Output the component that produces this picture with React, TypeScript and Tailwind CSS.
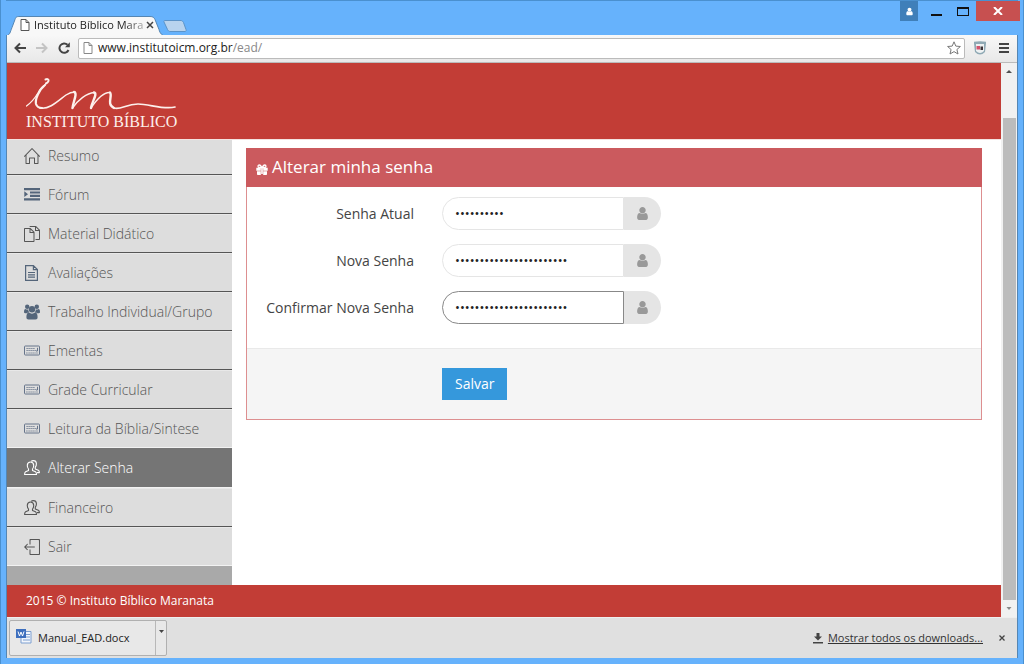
import { useState } from "react";
import type { ReactNode } from "react";
import { SlDocs, SlHome, SlLogout } from "react-icons/sl";

const UsersIcon = () => (
  <svg viewBox="0 0 16 16" className="size-4" fill="none" stroke="currentColor" strokeWidth="1.1" strokeLinejoin="round">
    <path d="M4.5 9C3.600 8 3.200 6.500 3.300 5.100C3.500 3 4.700 2 6.500 2s3 1 3.200 3.100c.1 1.400-.3 2.900-1.200 3.900v1.500l3 1.300c.8 .4 1 1.100 1 2.700H.6c0-1.600 .200-2.300 1-2.700l2.900-1.300z" />
    <path d="M7.200 1.300C7.700 .8 8.400 .6 9.300 .6c1.900 0 3 1 3.100 2.900 .1 1.500-.2 2.700-1.100 3.700v1.800l3 1.300c.8 .4 1.100 1 1.100 2.300h-2.400" />
  </svg>
);

const UserIcon = ({ className }: { className: string }) => (
  <svg viewBox="0 0 1792 1792" className={className} fill="currentColor">
    <path d="M1536 1399q0 109-62.5 187t-150.5 78h-854q-88 0-150.5-78t-62.5-187q0-85 8.5-160.5t31.5-152 58.5-131 94-89 134.5-34.5q131 128 313 128t313-128q76 0 134.5 34.5t94 89 58.5 131 31.5 152 8.5 160.5zm-256-887q0 159-112.5 271.5t-271.5 112.5-271.5-112.5-112.5-271.5 112.5-271.5 271.5-112.5 271.5 112.5 112.5 271.5z" />
  </svg>
);

const PageIcon = ({ className }: { className: string }) => (
  <svg viewBox="0 0 10 12" className={className} fill="#fff" stroke="currentColor">
    <path d="M1 .5h5l3 3v8H1zM6 .5v3h3" />
  </svg>
);

const IndentIcon = () => (
  <svg viewBox="0 0 16 16" className="size-4 text-[#54657a]" fill="currentColor">
    <path d="M0 1h16v2.200H0zM6 4.400h10v2.200H6zM6 7.800h10V10H6zM0 11.200h16v2.200H0zM.3 4.300L4 7.200.3 10.100z" />
  </svg>
);

const FileIcon = () => (
  <svg viewBox="0 0 16 16" className="size-4 text-[#54657a]" fill="none" stroke="currentColor" strokeWidth="1.2">
    <path d="M1.600 .6h7.800l4 4v10.800H1.600zM9.400 .6v4h4M4 7.500h7M4 9.800h7M4 12.100h7" />
  </svg>
);

const GroupIcon = () => (
  <svg viewBox="0 0 16 16" className="size-4 text-[#54657a]" fill="currentColor">
    <circle cx="3.200" cy="2.800" r="2.200" />
    <circle cx="12.800" cy="2.800" r="2.200" />
    <circle cx="8" cy="5.200" r="3.200" />
    <path d="M0 8c0-2 .5-3 1.500-3 .7 .5 1.800 .6 2.700 .4 0 1.200 .4 2 1 2.800-1 0-1.800 .4-2.400 1H1.200C.4 9.200 0 8.800 0 8zM16 8c0-2-.5-3-1.500-3-.7 .5-1.800 .6-2.700 .4 0 1.200-.4 2-1 2.800 1 0 1.800 .4 2.400 1h1.600c.8 0 1.200-.4 1.200-1.200zM2.400 13.300c0-3 .8-4.700 2.600-4.700 1.600 1.400 4.400 1.400 6 0 1.800 0 2.600 1.700 2.600 4.700 0 1.400-.8 2.200-2.100 2.200h-7c-1.300 0-2.100-.8-2.100-2.200z" />
  </svg>
);

const KeyboardIcon = () => (
  <svg viewBox="0 0 16 16" className="size-4 text-[#66748a]" fill="none" stroke="currentColor">
    <rect x=".5" y="3" width="15" height="9" rx=".8" />
    <path d="M2.500 5.500h8.500M2.500 7.500h10M4.500 10h7" strokeDasharray="1.200 .8" />
    <path d="M13.500 4.800v3.200h-1.500M2.300 10h1.200M12.400 10h1.200" />
  </svg>
);

const GiftIcon = () => (
  <svg viewBox="0 0 12 11" className="mt-1 h-[11px] w-3" fill="currentColor">
    <path d="M.3 3.800h4.500v3H.3zM7.200 3.800h4.500v3H7.200zM1 7.300h3.800V11H1.800C1.300 11 1 10.700 1 10.200zM7.200 7.300H11v2.900c0 .5-.3 .8-.8 .8h-3zM5.200 3.800h1.600V10H5.200z" />
    <path d="M5.500 3.500H3.300C1.600 3.500 1.600 1 3.300 1 4.500 1 5.200 2.300 6 3.500 6.800 2.300 7.500 1 8.700 1c1.700 0 1.700 2.500 0 2.500H6.500" fill="none" stroke="currentColor" strokeWidth="1.300" />
  </svg>
);

const menu: { label: string; icon: ReactNode }[] = [
  { label: "Resumo", icon: <SlHome className="size-4" /> },
  { label: "Fórum", icon: <IndentIcon /> },
  { label: "Material Didático", icon: <SlDocs className="size-4" /> },
  { label: "Avaliações", icon: <FileIcon /> },
  { label: "Trabalho Individual/Grupo", icon: <GroupIcon /> },
  { label: "Ementas", icon: <KeyboardIcon /> },
  { label: "Grade Curricular", icon: <KeyboardIcon /> },
  { label: "Leitura da Bíblia/Sintese", icon: <KeyboardIcon /> },
  { label: "Alterar Senha", icon: <UsersIcon /> },
  { label: "Financeiro", icon: <UsersIcon /> },
  { label: "Sair", icon: <SlLogout className="size-4" /> },
];

const fields = [
  { id: "atual", label: "Senha Atual", value: "maranata15" },
  { id: "nova", label: "Nova Senha", value: "institutobiblicomaranat" },
  { id: "confirma", label: "Confirmar Nova Senha", value: "institutobiblicomaranat" },
];

function TitleBar() {
  return (
    <div className="flex h-[35px] items-start justify-between border-t border-[#4a90cf] pl-[2px]">
      <div className="flex h-full items-end">
        <div className="relative flex h-[19px] w-[155px] items-center pl-3">
          <svg viewBox="0 0 155 19" className="absolute inset-0 size-full" fill="#f8f8f8" stroke="#5586b3">
            <path d="M-1 19.500c3-1 3-3 5-8l3-8c1-3 2-3 5-3h130c3 0 4 1 5 3l4 10c1 4 3 6 6 6" />
          </svg>
          <PageIcon className="relative h-3 w-[10px] text-[#555]" />
          <span className="relative ml-1 w-[112px] text-[11px] leading-4 whitespace-nowrap text-[#222] [mask-image:linear-gradient(to_right,#000_80%,#0004)]">
            Instituto Bíblico Mara
          </span>
          <button type="button" aria-label="Fechar guia" className="relative size-2 text-[#444]">
            <svg viewBox="0 0 8 8" stroke="currentColor" strokeWidth="1.5">
              <path d="M1 1l6 6M7 1L1 7" />
            </svg>
          </button>
        </div>
        <button type="button" aria-label="Nova guia" className="mb-[3px] h-3 w-6">
          <svg viewBox="0 0 24 12" fill="#b8d3ee" stroke="#5c94c9">
            <path d="M2 .5h16c1 0 2 1 2.500 2l2.500 7c.5 1 0 2-1 2H7c-1 0-2-1-2.500-2L1 2C.7 1 1 .5 2 .5z" />
          </svg>
        </button>
      </div>
      <div className="-mr-[2px] flex h-5 items-stretch">
        <button type="button" aria-label="Perfil" className="grid w-[18px] place-items-center bg-[#3f7fb9] text-white">
          <UserIcon className="size-[9px]" />
        </button>
        <button type="button" aria-label="Minimizar" className="flex w-8 items-end justify-center pb-[5px] pl-1">
          <span className="h-[2px] w-[11px] bg-[#111]" />
        </button>
        <button type="button" aria-label="Maximizar" className="flex w-[26px] items-end justify-center pb-[5px]">
          <span className="h-[9px] w-3 border border-t-2 border-[#111]" />
        </button>
        <button type="button" aria-label="Fechar" className="grid w-11 place-items-center bg-[#c75050] text-white">
          <svg viewBox="0 0 10 8" className="h-2 w-[10px]" stroke="currentColor" strokeWidth="2">
            <path d="M1 0l8 8M9 0L1 8" />
          </svg>
        </button>
      </div>
    </div>
  );
}

function Toolbar() {
  return (
    <div className="flex h-7 items-center border-b border-[#bbb] bg-linear-to-b from-[#f8f8f8] to-[#e8e8e8] pr-2 pl-[7px]">
      <button type="button" aria-label="Voltar" className="size-3 text-[#444]">
        <svg viewBox="0 0 12 12" fill="none" stroke="currentColor" strokeWidth="2">
          <path d="M6 1.500L1.500 6 6 10.500M1.500 6H12" />
        </svg>
      </button>
      <button type="button" aria-label="Avançar" className="ml-[10px] size-3 text-[#c4c4c4]">
        <svg viewBox="0 0 12 12" fill="none" stroke="currentColor" strokeWidth="2">
          <path d="M6 1.500L10.500 6 6 10.500M10.500 6H0" />
        </svg>
      </button>
      <button type="button" aria-label="Recarregar" className="ml-[10px] size-3 text-[#444]">
        <svg viewBox="0 0 12 12" fill="none" stroke="currentColor" strokeWidth="2">
          <path d="M9.500 2.800A4.700 4.700 0 1 0 10.500 8" />
          <path d="M11.800 .3v5H7z" fill="currentColor" stroke="none" />
        </svg>
      </button>
      <div className="ml-2 flex h-[21px] grow items-center rounded-[2px] border border-[#bbb] bg-white pr-[3px] pl-1">
        <PageIcon className="h-3 w-[10px] text-[#888]" />
        <span className="ml-[5px] grow text-[12px] leading-4 text-[#222]">
          www.institutoicm.org.br<span className="text-[#888]">/ead/</span>
        </span>
        <button type="button" aria-label="Favoritar" className="size-[14px]">
          <svg viewBox="0 0 14 14" fill="#fff" stroke="#777">
            <path d="M7 .8l1.800 4.300 4.600 .4-3.500 3 1.100 4.500L7 10.600 3 13l1.100-4.500-3.500-3 4.600-.4z" />
          </svg>
        </button>
      </div>
      <button type="button" aria-label="Extensão" className="ml-2 size-[14px]">
        <svg viewBox="0 0 14 14">
          <path d="M1 .8Q7-.5 13 .8V2.500L12 11Q7 16 2 11L1 2.500z" fill="#8fa9b4" />
          <path d="M3 3h8v7q-4 4-8 0z" fill="#eef1f2" />
          <path d="M3.500 5h3.500v3.500H3.500z" fill="#d3526c" />
          <path d="M7.500 5.500h2.500V9H7.500z" fill="#3d3237" />
        </svg>
      </button>
      <button type="button" aria-label="Menu" className="ml-3 flex w-[10px] flex-col gap-[2px]">
        <span className="h-[2px] bg-[#444]" />
        <span className="h-[2px] bg-[#444]" />
        <span className="h-[2px] bg-[#444]" />
      </button>
    </div>
  );
}

function Logo() {
  return (
    <div className="text-[#fdf0ec]">
      <svg viewBox="0 0 150 34" className="h-[34px] w-[150px]" fill="none" stroke="currentColor" strokeLinecap="round">
        <path d="M.5 29C6 25 9 21 12 16 14 12 16 9 19 8" strokeWidth="1.300" />
        <path d="M19 8C13 13 9 22 10 27c1 3 3 4 6 4" strokeWidth="2.200" />
        <path d="M14 31c9 2 18-7 26-13 3-2 6-3 9-3" strokeWidth="1.500" />
        <path d="M48 15c4 1-1 10-1.500 16" strokeWidth="2.400" />
        <path d="M46.500 31C52 23 61 16 68 15.500" strokeWidth="1.400" />
        <path d="M68 15.500c4 1-2 9-3 15.500" strokeWidth="2.400" />
        <path d="M65 31C71 22 78 15 84 15.500" strokeWidth="1.400" />
        <path d="M84 15.500c3 3-4 12 4 15.500" strokeWidth="2.400" />
        <path d="M88 31c7 2 12-4 24-4 11 0 26 6 37 3" strokeWidth="1.700" />
        <path d="M19.500 2.500c2-1 3.500 0 3 1.500-.5 1.500-1.500 2-2.500 2.500" strokeWidth="2" />
      </svg>
      <div className="mt-[3px] font-['Liberation_Serif',serif] text-[16px] leading-4">INSTITUTO BÍBLICO</div>
    </div>
  );
}

function Sidebar({ active, onSelect }: { active: string; onSelect: (label: string) => void }) {
  return (
    <nav className="flex w-[225px] shrink-0 flex-col justify-end overflow-hidden bg-[#a9a9a9] pb-[19px]">
      {menu.map((item) => (
        <a
          key={item.label}
          href="#"
          onClick={() => onSelect(item.label)}
          className={
            item.label === active
              ? "-mt-px flex h-[41px] shrink-0 items-center border-y border-[#f2f2f2] bg-[#757575] pl-[17px] text-white"
              : "flex h-[39px] shrink-0 items-center border-y border-t-[#e8e8e8] border-b-[#555] bg-[#dddddd] pl-[17px] text-[#555] last:border-b-[#f2f2f2]"
          }
        >
          {item.icon}
          <span className="ml-2 text-[14px] leading-5 font-light">{item.label}</span>
        </a>
      ))}
    </nav>
  );
}

function PasswordForm() {
  return (
    <form className="border border-[#dd8f90]" onSubmit={(e) => e.preventDefault()}>
      <h1 className="-mx-px -mt-px flex h-[39px] items-center gap-1 bg-[#cb5a5e] px-[10px] text-[17px] leading-6 text-white">
        <GiftIcon />
        Alterar minha senha
      </h1>
      <div className="flex flex-col gap-[14px] pt-[10px] pb-6">
        {fields.map((f) => (
          <div key={f.id} className="flex h-[33px] items-center">
            <label htmlFor={f.id} className="w-[167px] pt-[2px] text-right text-[14px] leading-5 text-[#444]">
              {f.label}
            </label>
            <input
              id={f.id}
              type="password"
              defaultValue={f.value}
              className={
                f.id === "confirma"
                  ? "ml-7 h-full w-[182px] rounded-l-full border border-[#888] bg-white px-3 text-[13px] text-[#222] outline-none"
                  : "ml-7 h-full w-[182px] rounded-l-full border border-[#e5e5e5] bg-white px-3 text-[13px] text-[#222] outline-none"
              }
            />
            <span className="grid h-full w-[37px] place-items-center rounded-r-full bg-[#e5e5e5] text-[#999]">
              <UserIcon className="size-[15px]" />
            </span>
          </div>
        ))}
      </div>
      <div className="flex h-[71px] items-center border-t border-[#e9e9e9] bg-[#f5f5f5] pl-[195px]">
        <button type="submit" className="h-8 bg-[#3598dc] px-[13px] text-[14px] leading-5 text-white">
          Salvar
        </button>
      </div>
    </form>
  );
}

function Scrollbar() {
  return (
    <div className="flex w-4 shrink-0 flex-col items-center bg-[#f1f1f1]">
      <svg viewBox="0 0 16 17" className="h-[17px] w-4" fill="#505050">
        <path d="M5 10l3-3 3 3z" />
      </svg>
      <div className="mt-[38px] w-[13px] grow bg-[#bcbcbc]" />
      <svg viewBox="0 0 16 17" className="h-[17px] w-4" fill="#888">
        <path d="M5.500 7L8 10l2.500-3z" />
      </svg>
    </div>
  );
}

function DownloadBar() {
  return (
    <div className="flex h-[41px] shrink-0 items-center border-t border-[#eee] bg-[#e0e0e0] pr-3 pl-[2px]">
      <div className="flex h-9 rounded-[2px] border border-[#b0b0b0] bg-[#e8e8e8] text-[#222]">
        <button type="button" className="flex w-[145px] items-center pl-[6px] text-[11px] leading-4">
          <svg viewBox="0 0 16 16" className="mb-1 size-4">
            <path d="M5 3.500h10V15H5z" fill="#f2f6fc" stroke="#7d9fd0" />
            <path d="M10 6.500h4M10 9h4M7 12h7" stroke="#7d9fd0" />
            <path d="M0 1h10v9H0z" fill="#3d6fbe" />
            <path d="M2 3.500l1.500 4.500L5 4l1.500 4L8 3.500" fill="none" stroke="#fff" />
          </svg>
          <span className="ml-[6px]">Manual_EAD.docx</span>
        </button>
        <button type="button" aria-label="Opções do download" className="flex w-[11px] justify-center border-l border-[#b8b8b8] pt-[9px]">
          <svg viewBox="0 0 5 3" className="h-[3px] w-[5px]" fill="#444">
            <path d="M0 0h5L2.500 3z" />
          </svg>
        </button>
      </div>
      <svg viewBox="0 0 10 11" className="ml-auto h-[11px] w-[10px]" fill="#444">
        <path d="M3.500 0h3v3.500H9L5 7.500 1 3.500h2.500zM0 9h10v1.500H0z" />
      </svg>
      <a href="#" className="ml-[5px] text-[11px] leading-4 text-[#333] underline">
        Mostrar todos os downloads...
      </a>
      <button type="button" aria-label="Fechar barra" className="ml-4 size-[6px] text-[#444]">
        <svg viewBox="0 0 6 6" stroke="currentColor" strokeWidth="1.300">
          <path d="M.5 .5l5 5M5.500 .5l-5 5" />
        </svg>
      </button>
    </div>
  );
}

export default function App() {
  const [active, setActive] = useState("Alterar Senha");

  return (
    <div className="flex h-screen flex-col border-x border-[#4a90cf] bg-[#66b2fc] px-[5px] pb-[6px] font-['Open_Sans',sans-serif]">
      <TitleBar />
      <div className="flex min-h-0 grow flex-col border-x border-[#5586b3]">
        <Toolbar />
        <div className="flex min-h-0 grow">
          <div className="flex min-w-0 grow flex-col bg-white">
            <header className="h-[77px] shrink-0 border-b border-[#f3e3df] bg-[#c23d36] pt-[14px] pl-[19px]">
              <Logo />
            </header>
            <div className="flex min-h-0 grow">
              <Sidebar active={active} onSelect={setActive} />
              <main className="min-w-0 grow pt-2 pr-[19px] pl-[14px]">
                <PasswordForm />
              </main>
            </div>
            <footer className="flex h-8 shrink-0 items-center bg-[#c23d36] pl-[19px] text-[12px] leading-4 text-white">
              2015 © Instituto Bíblico Maranata
            </footer>
          </div>
          <Scrollbar />
        </div>
        <DownloadBar />
      </div>
    </div>
  );
}
